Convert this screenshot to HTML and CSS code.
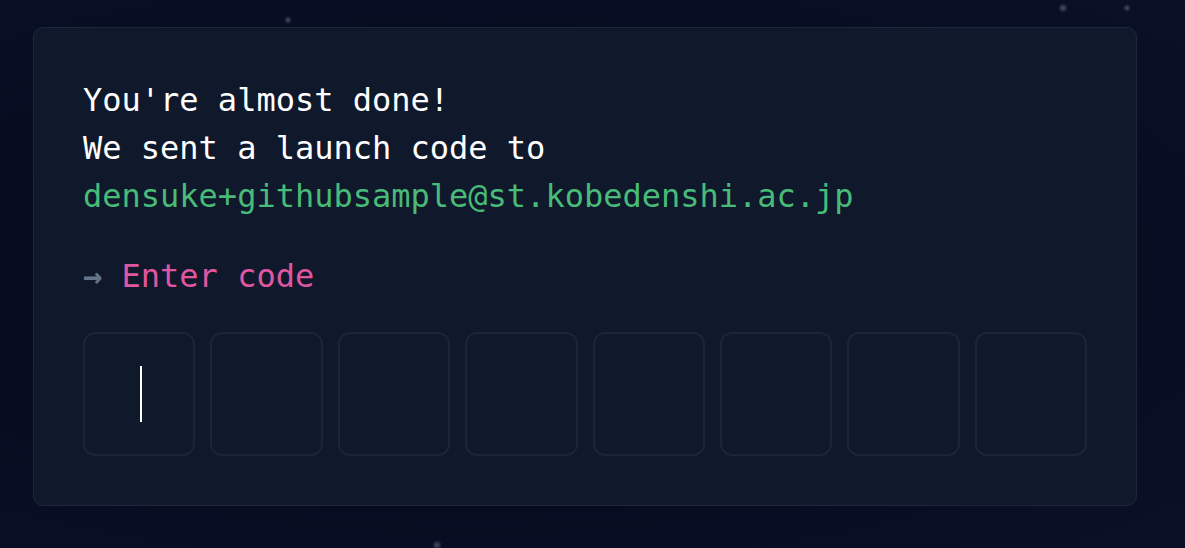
FILE: index.html
```html
<!DOCTYPE html>
<html lang="en">
<head>
<meta charset="utf-8">
<title>Enter code</title>
<link rel="stylesheet" href="styles.css">
</head>
<body>
<div class="stars">
  <span class="star s1"></span>
  <span class="star s2"></span>
  <span class="star s3"></span>
  <span class="star s4"></span>
</div>
<main class="card">
  <p class="line">You're almost done!</p>
  <p class="line">We sent a launch code to</p>
  <p class="line email">densuke+githubsample@st.kobedenshi.ac.jp</p>
  <p class="prompt"><span class="arrow">→</span> <span class="label">Enter code</span></p>
  <div class="codes">
    <div class="box active"><span class="caret"></span></div>
    <div class="box"></div>
    <div class="box"></div>
    <div class="box"></div>
    <div class="box"></div>
    <div class="box"></div>
    <div class="box"></div>
    <div class="box"></div>
  </div>
</main>
</body>
</html>
```
FILE: styles.css
```css
html, body {
  margin: 0;
  padding: 0;
  height: 100%;
}
body {
  background: radial-gradient(ellipse at 40% 50%, #050c1f 0%, #060d21 60%, #0a1026 100%);
  font-family: "DejaVu Sans Mono", "Liberation Mono", monospace;
  overflow: hidden;
  position: relative;
  padding: 27px 48px 0 33px;
  box-sizing: border-box;
}
.stars {
  position: absolute;
  inset: 0;
  pointer-events: none;
}
.star {
  position: absolute;
  width: 8px;
  height: 8px;
  border-radius: 50%;
  background: radial-gradient(circle, rgba(150,160,190,0.45) 0%, rgba(150,160,190,0) 70%);
}
.s1 { left: 284px; top: 16px; }
.s2 { left: 1058px; top: 3px; width: 10px; height: 10px; }
.s3 { left: 1123px; top: 4px; }
.s4 { left: 432px; top: 540px; width: 10px; height: 10px; }
.card {
  position: relative;
  background: #10182b;
  border: 1px solid #1f2637;
  border-radius: 10px;
  padding: 48px 48px 48px 49px;
  height: 479px;
  box-sizing: border-box;
}
.line {
  margin: 0;
  font-size: 32px;
  line-height: 48px;
  color: #ffffff;
  white-space: nowrap;
}
.email {
  color: #48bb78;
}
.prompt {
  margin: 32px 0 0;
  font-size: 32px;
  line-height: 48px;
  white-space: nowrap;
}
.arrow {
  color: #64748b;
  font-weight: bold;
}
.label {
  color: #e056a0;
}
.codes {
  margin-top: 32px;
  display: grid;
  grid-template-columns: repeat(8, 1fr);
  gap: 15px;
  margin-left: 0;
  margin-right: 1px;
}
.box {
  height: 124px;
  border: 2px solid #1d2434;
  border-radius: 12px;
  box-sizing: border-box;
  display: flex;
  align-items: center;
  justify-content: center;
}
.active {
  padding-left: 3px;
}
.caret {
  width: 2px;
  height: 56px;
  background: #ffffff;
}
```
